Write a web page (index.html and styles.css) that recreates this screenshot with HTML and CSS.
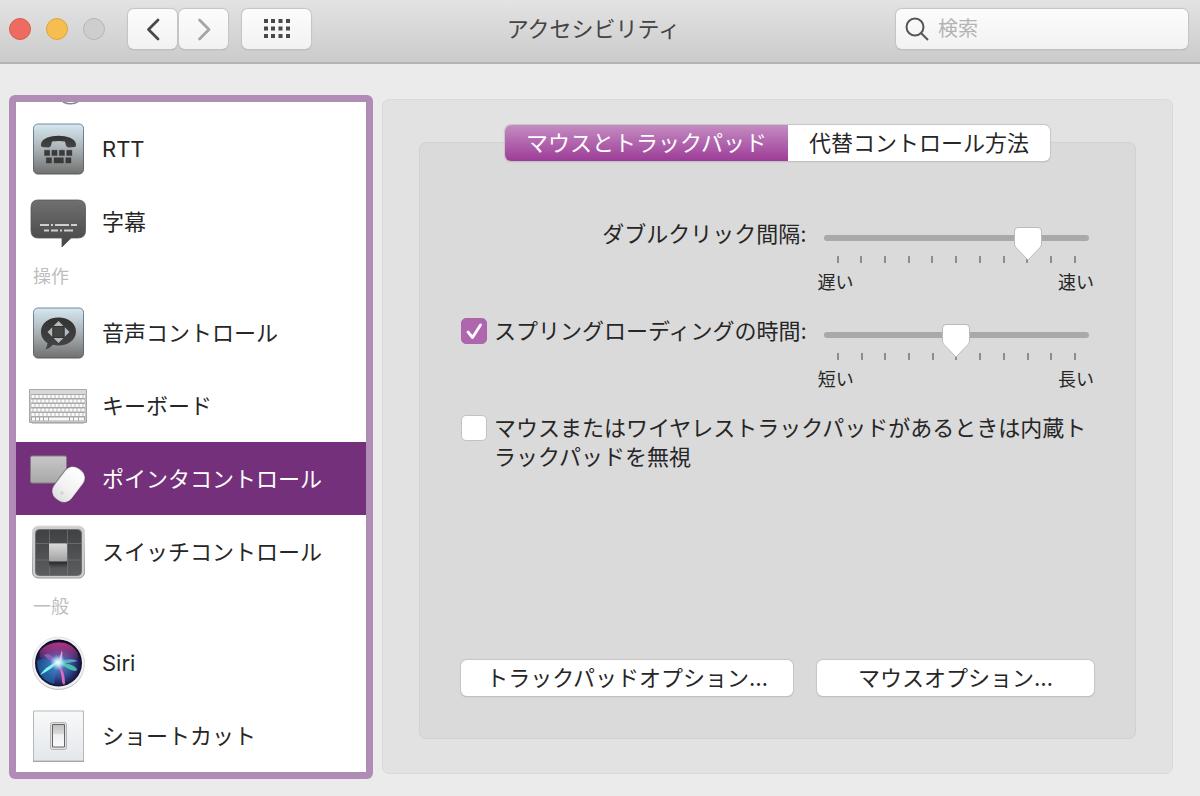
FILE: index.html
```html
<!DOCTYPE html>
<html lang="ja">
<head>
<meta charset="utf-8">
<meta name="viewport" content="width=device-width, initial-scale=1">
<title>アクセシビリティ</title>
<link rel="stylesheet" href="styles.css">
</head>
<body>
<header class="toolbar">
  <div class="toolbar-left">
    <div class="lights">
      <button class="light light-close" aria-label="閉じる"></button>
      <button class="light light-min" aria-label="しまう"></button>
      <button class="light light-off" aria-label="拡大" disabled></button>
    </div>
    <div class="nav">
      <button class="tool" aria-label="戻る"><svg width="48" height="40" viewBox="0 0 48 40"><path d="M29 11 19.500 20.500 29 30" fill="none" stroke="#484848" stroke-width="2.800" stroke-linecap="round" stroke-linejoin="round"/></svg></button>
      <button class="tool" aria-label="進む"><svg width="48" height="40" viewBox="0 0 48 40"><path d="M19.500 11 29 20.500 19.500 30" fill="none" stroke="#a6a6a6" stroke-width="2.800" stroke-linecap="round" stroke-linejoin="round"/></svg></button>
    </div>
    <button class="tool tool-grid" aria-label="すべてを表示"><svg width="26" height="20" viewBox="0 0 26 20" fill="#484848"><path d="M0 0h4v4H0zM7 0h4v4H7zM14.500 0h4v4h-4zM22 0h4v4h-4zM0 7.500h4v4H0zM7 7.500h4v4H7zM14.500 7.500h4v4h-4zM22 7.500h4v4h-4zM0 15h4v4H0zM7 15h4v4H7zM14.500 15h4v4h-4zM22 15h4v4h-4z"/></svg></button>
  </div>
  <h1 class="title">アクセシビリティ</h1>
  <div class="toolbar-right">
    <label class="search">
      <svg width="24" height="24" viewBox="0 0 24 24" fill="none" stroke="#555" stroke-width="2"><circle cx="10" cy="10" r="8.500"/><path d="M16 16l7 7"/></svg>
      <input class="search-input" type="search" placeholder="検索" aria-label="検索">
    </label>
  </div>
</header>

<main class="content">
  <nav class="sidebar" aria-label="機能">
    <ul class="list">
      <li class="list-edge"><svg width="58" height="12" viewBox="0 0 58 12"><path d="M34 0q9 4 16-1" fill="none" stroke="#85858d" stroke-width="1.500"/></svg></li>
      <li><button class="item">
        <svg class="icon" viewBox="0 0 58 58">
          <defs>
            <linearGradient id="tile" x2="0" y2="1"><stop stop-color="#d6e8f1"/><stop offset=".5" stop-color="#aab2b6"/><stop offset="1" stop-color="#70706f"/></linearGradient>
            <linearGradient id="rim" x2="0" y2="1"><stop stop-color="#7189a0"/><stop offset="1" stop-color="#595b5c"/></linearGradient>
            <linearGradient id="dark" x2="0" y2="1"><stop stop-color="#333"/><stop offset="1" stop-color="#454545"/></linearGradient>
          </defs>
          <rect x="4.500" y="4" width="50" height="50" rx="4.500" fill="url(#tile)" stroke="url(#rim)"/>
          <path d="M12 24C13 18.500 21 15.800 29.500 15.800S46 18.500 47 24q.3 2.700-1 3l-6.500 .4q-2 0-2.500-1.800l-1-4q-6.500-1.400-13 0L22 25.600q-.5 1.800-2.500 1.800L13 27q-1.300-.3-1-3z" fill="url(#dark)"/>
          <path d="M15.500 30.200h5.200v5.200h-5.200zM22.900 30.200h5.200v5.200h-5.200zM30.300 30.200h5.200v5.200h-5.200zM37.700 30.200h5.200v5.200h-5.200zM17.300 37.800h5.200v5.200h-5.200zM25 37.800h9.400v5.200H25zM36.800 37.800H42v5.200h-5.200z" fill="#3a3a3a" stroke="#333" stroke-width=".4"/>
        </svg>
        <span>RTT</span></button></li>
      <li><button class="item">
        <svg class="icon" viewBox="0 0 58 58">
          <defs><linearGradient id="bubble" x2="0" y2="1"><stop stop-color="#707070"/><stop offset="1" stop-color="#454545"/></linearGradient></defs>
          <path d="M9 7h40q7.500 0 7.500 7.500v23q0 7.500-7.500 7.500h-7l-9 9v-9H9q-7 0-7-7.500v-23Q2 7 9 7z" fill="url(#bubble)" stroke="#555" stroke-width=".8"/>
          <path d="M11 32h9m2 0h2m2 0h14m2 0h6M15 37.500h5m2 0h7m2 0h2m2 0h9" stroke="#cfcfcf" stroke-width="2"/>
        </svg>
        <span>字幕</span></button></li>
      <li><h2 class="section">操作</h2></li>
      <li><button class="item">
        <svg class="icon" viewBox="0 0 58 58">
          <rect x="4.500" y="4" width="50" height="50" rx="4.500" fill="url(#tile)" stroke="url(#rim)"/>
          <path d="M29.500 13.500c10 0 17.500 6 17.500 14s-7.500 14-17.500 14q-3 0-5.500-.7-3 3.500-7.500 4.800 1.800-3.200 2-6.600C14 36.200 12 32.200 12 27.500c0-8 7.500-14 17.500-14z" fill="url(#dark)"/>
          <path d="M29.500 17l5 5h-10zM29.500 39l-5-5h10zM18.500 28l5-5v10zM40.500 28l-5-5v10z" fill="#b3babd"/>
          <path d="M24 22.500h11v11H24z" fill="#444" stroke="#333"/>
        </svg>
        <span>音声コントロール</span></button></li>
      <li><button class="item">
        <svg class="icon" viewBox="0 0 58 58">
          <defs><pattern id="keys" x="2" y="17" width="4" height="9" patternUnits="userSpaceOnUse"><path d="M.4 1h3.200v3H.4zM2.400 5.500H4v3H2.400zM0 5.500h1.600v3H0z" fill="#fafafa"/></pattern></defs>
          <path d="M3 46h52" stroke="#ccc" stroke-width="2"/>
          <path d="M.5 12.500h57v33H.5z" fill="#c6c7c6" stroke="#a8a8a8"/>
          <path d="M1 13h56v4H1z" fill="#d7d8d7"/>
          <path d="M2 17h54v27H2z" fill="#a9a9a9"/><path d="M2 17h54v23H2z" fill="url(#keys)"/>
          <path d="M3 40.500h3v3H3zM7 40.500h3v3H7zM11 40.500h3v3h-3zM15 40.500h4v3h-4zM20 40.500h20v3H20zM41 40.500h3v3h-3zM45 40.500h4v3h-4zM50 40.500h5v3h-5z" fill="#fafafa"/>
        </svg>
        <span>キーボード</span></button></li>
      <li><button class="item item-selected" aria-current="page">
        <svg class="icon" viewBox="0 0 58 58">
          <defs>
            <linearGradient id="pad" x2="0" y2="1"><stop stop-color="#c7c7c7"/><stop offset="1" stop-color="#a8a8a8"/></linearGradient>
            <linearGradient id="mouse" x2="0" y2="1"><stop stop-color="#fff"/><stop offset=".6" stop-color="#f2f2f2"/><stop offset="1" stop-color="#e0e0e0"/></linearGradient>
          </defs>
          <rect x="1.500" y="6" width="36" height="27" rx="1.500" fill="url(#pad)" stroke="#828282"/>
          <rect x="28.300" y="15.500" width="22.400" height="38" rx="9.500" transform="rotate(37 39.500 34.500)" fill="url(#mouse)" stroke="#54285a" stroke-opacity=".5"/>
          <circle cx="33" cy="43" r="1.800" fill="#d6d6d6"/>
        </svg>
        <span>ポインタコントロール</span></button></li>
      <li><button class="item">
        <svg class="icon" viewBox="0 0 58 58">
          <defs>
            <linearGradient id="frame" x2="0" y2="1"><stop stop-color="#dedede"/><stop offset="1" stop-color="#999"/></linearGradient>
            <linearGradient id="board" x2="0" y2="1"><stop stop-color="#3f4142"/><stop offset="1" stop-color="#5b5d5f"/></linearGradient>
            <linearGradient id="key" x2="0" y2="1"><stop stop-color="#dadada"/><stop offset="1" stop-color="#a2a2a2"/></linearGradient>
            <linearGradient id="drop" x2="0" y2="1"><stop stop-color="#1c1c1c"/><stop offset="1" stop-color="#1c1c1c" stop-opacity="0"/></linearGradient>
          </defs>
          <rect x="3.500" y="3" width="52" height="52" rx="5.500" fill="#cdcdcd" stroke="url(#frame)"/>
          <rect x="6.500" y="6.500" width="46" height="46" rx="4" fill="url(#board)" stroke="#6f6f6f"/>
          <path d="M20.500 7v45M38.500 7v45M7 20.500h45M7 37h45" stroke="#77797b" stroke-width=".7"/>
          <path d="M20 37h18v8H20z" fill="url(#drop)"/>
          <rect x="20" y="20.500" width="18" height="18" rx="1" fill="url(#key)"/>
        </svg>
        <span>スイッチコントロール</span></button></li>
      <li><h2 class="section">一般</h2></li>
      <li><button class="item">
        <svg class="icon" viewBox="0 0 58 58">
          <defs>
            <radialGradient id="orb" cx=".5" cy=".52" r=".5"><stop stop-color="#6b8fd0"/><stop offset=".55" stop-color="#33509a"/><stop offset=".9" stop-color="#1b1c4c"/><stop offset="1" stop-color="#0c0b26"/></radialGradient>
            <linearGradient id="pink" x2="0" y2="1"><stop stop-color="#b8327f"/><stop offset="1" stop-color="#c23a8e" stop-opacity="0"/></linearGradient>
            <linearGradient id="blue" x1="0" y1="1" x2="1" y2="0"><stop stop-color="#1479c9"/><stop offset="1" stop-color="#29a3c8" stop-opacity="0"/></linearGradient>
            <radialGradient id="glow"><stop stop-color="#fff"/><stop offset=".4" stop-color="#c8f6fb" stop-opacity=".8"/><stop offset="1" stop-color="#8bdcff" stop-opacity="0"/></radialGradient>
          </defs>
          <circle cx="29.500" cy="29.800" r="26.200" fill="#bcbcbc"/>
          <circle cx="29.500" cy="29" r="26" fill="#f2f2f2" stroke="#dadada" stroke-width=".6"/>
          <circle cx="29.500" cy="29" r="23.500" fill="url(#orb)"/>
          <path d="M11 17C17 8 39 3 48 18q3 7-2 9-8-7-17 1-6-9-14-3-6-1-4-8z" fill="url(#pink)"/>
          <path d="M8 27q8-6 21 2l-4 21Q9 46 8 27z" fill="url(#blue)" opacity=".8"/>
          <path d="M15 21q6-4 14 8l1 1q-11-3-15-9z" fill="#b96cd0" opacity=".55"/>
          <path d="M29 29l4-13q1 8-1 13z" fill="#ffb3e5" opacity=".85"/>
          <path d="M29 28q12-5 20-1-8 2-19 3z" fill="#73b6c8" opacity=".8"/>
          <path d="M30 28q18 3 18 8-2 4-18-7z" fill="#4fe2b0" opacity=".75"/>
          <path d="M28 29q8 7 8 20-1 4-3-1 0-10-5-19z" fill="#ef6ec4" opacity=".9"/>
          <path d="M29 28q-7 8-18 13 5-8 18-14z" fill="#7df5ef"/>
          <circle cx="29" cy="28.500" r="8" fill="url(#glow)"/>
        </svg>
        <span>Siri</span></button></li>
      <li><button class="item">
        <svg class="icon" viewBox="0 0 58 58">
          <defs>
            <linearGradient id="plate" x2="0" y2="1"><stop stop-color="#f8f9fb"/><stop offset="1" stop-color="#e3e7eb"/></linearGradient>
            <linearGradient id="rocker" x2="0" y2="1"><stop stop-color="#bfbfbf"/><stop offset=".4" stop-color="#d9d9d9"/><stop offset=".45" stop-color="#efefef"/><stop offset="1" stop-color="#fafafa"/></linearGradient>
          </defs>
          <path d="M4.500 4h50v50h-50z" fill="url(#plate)" stroke="#b5b7b9"/><path d="M4 54.500h51" stroke="#a4a6a8"/>
          <rect x="21.500" y="15.500" width="16" height="27" rx="2" fill="#e1e1e1" stroke="#b4b4b4"/>
          <path d="M23.500 17.500h12v22.500h-12z" fill="url(#rocker)" stroke="#636363"/>
        </svg>
        <span>ショートカット</span></button></li>
    </ul>
  </nav>

  <section class="pane">
    <div class="tabs" role="tablist">
      <button class="tab tab-active" role="tab" aria-selected="true">マウスとトラックパッド</button>
      <button class="tab" role="tab" aria-selected="false">代替コントロール方法</button>
    </div>
    <div class="group" role="tabpanel">
      <div class="row">
        <label class="row-label" for="double-click">ダブルクリック間隔:</label>
        <div class="slider">
          <input class="range" id="double-click" type="range" min="0" max="10" value="8">
          <div class="ticks"><i></i><i></i><i></i><i></i><i></i><i></i><i></i><i></i><i></i><i></i><i></i></div>
          <div class="ends"><span>遅い</span><span>速い</span></div>
        </div>
      </div>
      <div class="row">
        <label class="check check-line"><input class="box" type="checkbox" checked><span>スプリングローディングの時間:</span></label>
        <div class="slider">
          <input class="range" type="range" min="0" max="10" value="5" aria-label="スプリングローディングの時間">
          <div class="ticks"><i></i><i></i><i></i><i></i><i></i><i></i><i></i><i></i><i></i><i></i><i></i></div>
          <div class="ends"><span>短い</span><span>長い</span></div>
        </div>
      </div>
      <label class="check check-wide"><input class="box" type="checkbox"><span>マウスまたはワイヤレストラックパッドがあるときは内蔵トラックパッドを無視</span></label>
      <div class="actions">
        <button class="push">トラックパッドオプション…</button>
        <button class="push">マウスオプション…</button>
      </div>
    </div>
  </section>
</main>
</body>
</html>
```

FILE: styles.css
```css
* { box-sizing: border-box; }

body {
  margin: 0;
  min-height: 100vh;
  display: flex;
  flex-direction: column;
  background: #ebebeb;
  color: #262626;
  font: 22px/28px Inter, "Noto Sans CJK JP", sans-serif;
}

button, input { font: inherit; color: inherit; }
button { padding: 0; border: 0; }
svg { display: block; flex: none; }

/* Toolbar */
.toolbar {
  display: grid;
  grid-template-columns: 1fr auto 1fr;
  align-items: center;
  height: 64px;
  padding: 0 12px 4px 9px;
  background: linear-gradient(#e3e3e3, #cbcbcb);
  border-bottom: 2px solid #b4b4b4;
}
.toolbar-left { display: flex; align-items: center; }
.toolbar-right { display: flex; justify-content: flex-end; }
.lights { display: flex; gap: 15px; margin-right: 23px; }
.light { width: 22px; height: 22px; border: 1px solid; border-radius: 50%; }
.light-close { background: #ed6b60; border-color: #d95a50; }
.light-min { background: #f6be4f; border-color: #dea341; }
.light-off { background: #cecece; border-color: #b6b6b6; }
.nav { display: flex; gap: 2px; margin-right: 14px; }
.tool {
  display: flex;
  align-items: center;
  justify-content: center;
  width: 49px;
  height: 40px;
  border-radius: 6px;
  background: linear-gradient(#fcfcfc, #f2f2f2);
  box-shadow: 0 0 1px 1px #c4c4c4, 0 1px 1px #999;
}
.tool-grid { width: 69px; }
.title {
  margin: 0;
  padding-right: 10px;
  font-size: 22px;
  font-weight: 400;
  color: #444;
}
.search {
  display: flex;
  align-items: center;
  gap: 9px;
  width: 292px;
  height: 40px;
  padding: 0 9px;
  border-radius: 6px;
  background: linear-gradient(#fcfcfc, #f2f2f2);
  box-shadow: 0 0 1px 1px #c4c4c4, 0 1px 1px #999;
}
.search-input {
  flex: 1;
  min-width: 0;
  padding: 0;
  border: 0;
  outline: 0;
  background: none;
  font-size: 20px;
}
.search-input::placeholder { color: #b3b3b3; }

/* Body */
.content {
  flex: 1;
  display: grid;
  grid-template-columns: 364px 1fr;
  gap: 9px;
  padding: 31px 27px 17px 9px;
}

.sidebar {
  display: flex;
  padding: 6px;
  border-radius: 6px;
  background: #b18cb7;
}
.list {
  flex: 1;
  margin: 0;
  padding: 0;
  list-style: none;
  background: #fff;
  border: 1px solid #a990ad;
}
.list-edge { height: 10px; padding-left: 13px; overflow: hidden; }
.item {
  display: flex;
  align-items: center;
  gap: 15px;
  width: 100%;
  height: 73px;
  padding-left: 13px;
  background: none;
  text-align: left;
}
.item-selected { background: #74307a; color: #fff; }
.icon { width: 58px; height: 58px; }
.section {
  margin: 0;
  padding: 5px 17px;
  font-size: 18px;
  font-weight: 400;
  color: #bdbdbd;
}

/* Settings pane */
.pane {
  display: flex;
  flex-direction: column;
  margin: 4px 0 5px;
  padding: 25px 36px 34px;
  border: 1px solid #d9d9d9;
  border-radius: 7px;
  background: #e2e2e2;
}
.tabs {
  z-index: 1;
  display: flex;
  align-self: center;
  height: 36px;
  border-radius: 6px;
  background: #fff;
  box-shadow: 0 0 1px 1px #c6c6c6, 0 1px 1px #999;
}
.tab { padding: 0 21px; background: none; border-radius: 6px; }
.tab-active {
  border-radius: 6px 0 0 6px;
  background: linear-gradient(#c48cc2, #9d3c97);
  color: #fff;
}
.group {
  flex: 1;
  display: flex;
  flex-direction: column;
  margin-top: -19px;
  padding: 77px 41px 42px;
  border: 1px solid #d1d1d1;
  border-radius: 7px;
  background: #dadada;
}
.row {
  display: grid;
  grid-template-columns: 5fr 4fr;
  gap: 11px;
  margin-bottom: 22px;
}
.row-label { text-align: right; }
.check { display: flex; align-items: flex-start; gap: 7px; }
.check-line { white-space: nowrap; }
.check-wide { padding-right: 6px; line-height: 29px; }
.box {
  appearance: none;
  flex: none;
  width: 26px;
  height: 26px;
  margin: 1px 0 0;
  border-radius: 5px;
  background: #fff;
  border: 1px solid #c2c2c2;
}
.box:checked {
  border-color: #a967a7;
  background: #b066ae url("data:image/svg+xml,%3Csvg xmlns='http://www.w3.org/2000/svg' viewBox='0 0 24 24'%3E%3Cpath d='M6 13l4.500 5.500L18.500 6' fill='none' stroke='white' stroke-width='2.800' stroke-linecap='round' stroke-linejoin='round'/%3E%3C/svg%3E");
}

.slider { padding-top: 7px; }
.range {
  appearance: none;
  position: relative;
  display: block;
  width: calc(100% - 11px);
  height: 22px;
  margin: 0 5px 0 6px;
  background: none;
}
.range::-webkit-slider-runnable-track {
  height: 6px;
  border-radius: 3px;
  background: #a9a9a9;
}
.range::-webkit-slider-thumb {
  appearance: none;
  width: 28px;
  height: 34px;
  margin-top: -8px;
  background: url("data:image/svg+xml,%3Csvg xmlns='http://www.w3.org/2000/svg' viewBox='0 0 28 34'%3E%3Cpath d='M4 .5h20q3.500 0 3.500 3.500v13q0 2-1.500 3.500L14 33 2 20.500Q.5 19 .5 17V4Q.5.5 4 .5z' fill='white' stroke='%23bbb'/%3E%3C/svg%3E");
}
.ticks {
  display: flex;
  justify-content: space-between;
  margin: 7px 18px 0 19px;
}
.ticks i { width: 2px; height: 7px; background: #8e8e8e; }
.ends {
  display: flex;
  justify-content: space-between;
  margin-top: 8px;
  font-size: 18px;
  line-height: 24px;
}

.actions {
  display: grid;
  grid-template-columns: 6fr 5fr;
  gap: 24px;
  margin-top: auto;
  padding-top: 24px;
}
.push {
  height: 36px;
  border-radius: 6px;
  background: #fff;
  box-shadow: 0 0 1px 1px #c6c6c6, 0 1px 1px #999;
}
```
